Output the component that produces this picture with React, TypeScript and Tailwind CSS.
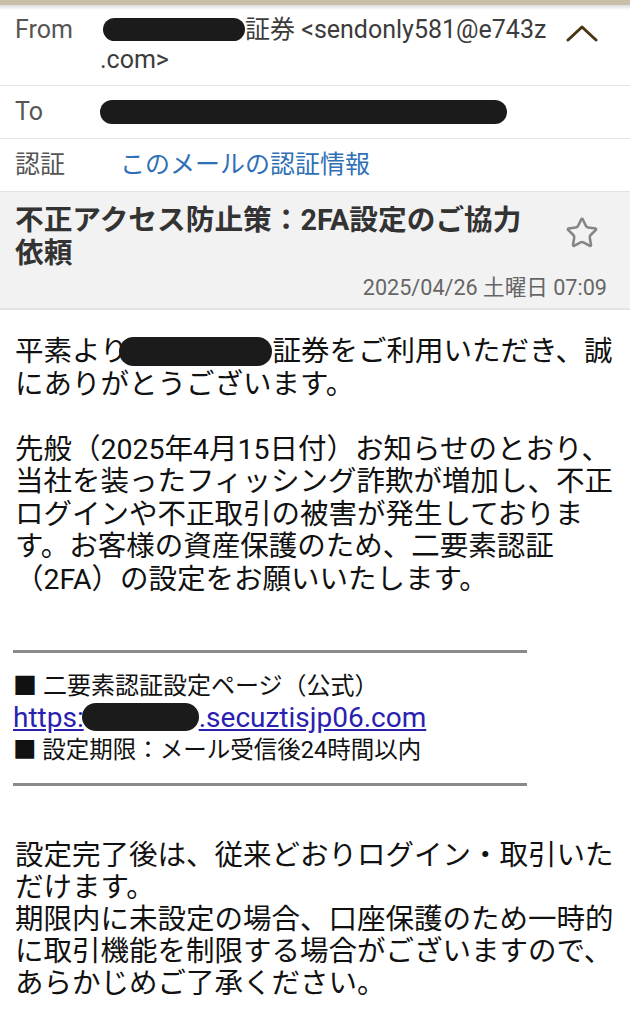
import { Star } from "lucide-react";

function Redact({ className }: { className: string }) {
  return <span className={`inline-block rounded-full bg-[#1b1b1b] ${className}`} />;
}

export default function App() {
  return (
    <div className="w-[630px] min-h-[1024px] bg-white font-['Roboto','Noto_Sans_CJK_JP',sans-serif]">
      {/* top strip */}
      <div className="h-[5px] bg-[#c9bfa7]" />
      <div className="h-[5px] -mb-[5px] bg-gradient-to-b from-[#dcdcdc] to-white relative" />

      {/* From */}
      <div className="flex border-b border-[#e2e2e2] pl-[15px] pr-[32px] pt-[10px] pb-[10px] text-[25px] leading-[30px]">
        <div className="w-[85px] shrink-0 text-[#555]">From</div>
        <div className="flex-1 text-[#3c3c3c]">
          <Redact className="ml-[3px] w-[142px] h-[23px] align-[-3px]" />
          <span>証券 &lt;sendonly581@e743z</span>
          <br />
          .com&gt;
        </div>
        <svg width="32" height="20" viewBox="0 0 32 20" className="mt-[8px] shrink-0">
          <polyline points="2,17 16,4 30,17" fill="none" stroke="#4a3414" strokeWidth="3" strokeLinecap="round" strokeLinejoin="round" />
        </svg>
      </div>

      {/* To */}
      <div className="flex border-b border-[#e2e2e2] pl-[15px] pr-[32px] pt-[11px] pb-[11px] text-[25px] leading-[30px]">
        <div className="w-[85px] shrink-0 text-[#555]">To</div>
        <div className="flex-1">
          <Redact className="w-[407px] h-[24px] align-[-4px]" />
        </div>
      </div>

      {/* 認証 */}
      <div className="flex border-b border-[#e2e2e2] pl-[15px] pr-[32px] pt-[11px] pb-[11px] text-[25px] leading-[30px]">
        <div className="w-[105px] shrink-0 text-[#555]">認証</div>
        <div className="flex-1 text-[#2f70b6]">このメールの認証情報</div>
      </div>

      {/* subject */}
      <div className="bg-[#f2f2f2] border-b-2 border-[#e4e4e4] pl-[15px] pr-[23px] pt-[12px] pb-[7px]">
        <div className="flex">
          <div className="flex-1 text-[28.7px] leading-[33px] font-bold text-[#333]">
            不正アクセス防止策：2FA設定のご協力
            <br />
            依頼
          </div>
          <Star className="mt-[12px] mr-[8px] shrink-0" size={34} strokeWidth={1.8} color="#858585" />
        </div>
        <div className="mt-[5px] text-right text-[21.6px] leading-[26px] text-[#666]">2025/04/26 土曜日 07:09</div>
      </div>

      {/* body */}
      <div className="px-[15px] pt-[26px] pb-[20px] text-[#111]">
        <p className="text-[28.5px] leading-[32.5px]">
          平素より
          <Redact className="-ml-[9px] w-[153px] h-[29px] align-[-5px]" />
          証券をご利用いただき、誠
          <br />
          にありがとうございます。
        </p>
        <p className="mt-[32.5px] text-[28.5px] leading-[32.5px]">
          先般（2025年4月15日付）お知らせのとおり、
          <br />
          当社を装ったフィッシング詐欺が増加し、不正
          <br />
          ログインや不正取引の被害が発生しておりま
          <br />
          す。お客様の資産保護のため、二要素認証
          <br />
          （2FA）の設定をお願いいたします。
        </p>

        <div className="mt-[54px] -ml-[2px] w-[514px] h-[3px] bg-[#8a8a8a]" />

        <div className="mt-[17px] -ml-[2px] text-[24px] leading-[32px]">
          <div>■ 二要素認証設定ページ（公式）</div>
          <div className="text-[28px] text-[#2a20b0]">
            <span className="underline">https:</span>
            <Redact className="-ml-[2px] w-[117px] h-[28px] align-[-4px]" />
            <span className="underline">.secuztisjp06.com</span>
          </div>
          <div className="text-[23.5px]">■ 設定期限：メール受信後24時間以内</div>
        </div>

        <div className="mt-[17px] -ml-[2px] w-[514px] h-[3px] bg-[#8a8a8a]" />

        <p className="mt-[54px] text-[28.5px] leading-[32px]">
          設定完了後は、従来どおりログイン・取引いた
          <br />
          だけます。
          <br />
          期限内に未設定の場合、口座保護のため一時的
          <br />
          に取引機能を制限する場合がございますので、
          <br />
          あらかじめご了承ください。
        </p>
      </div>
    </div>
  );
}
